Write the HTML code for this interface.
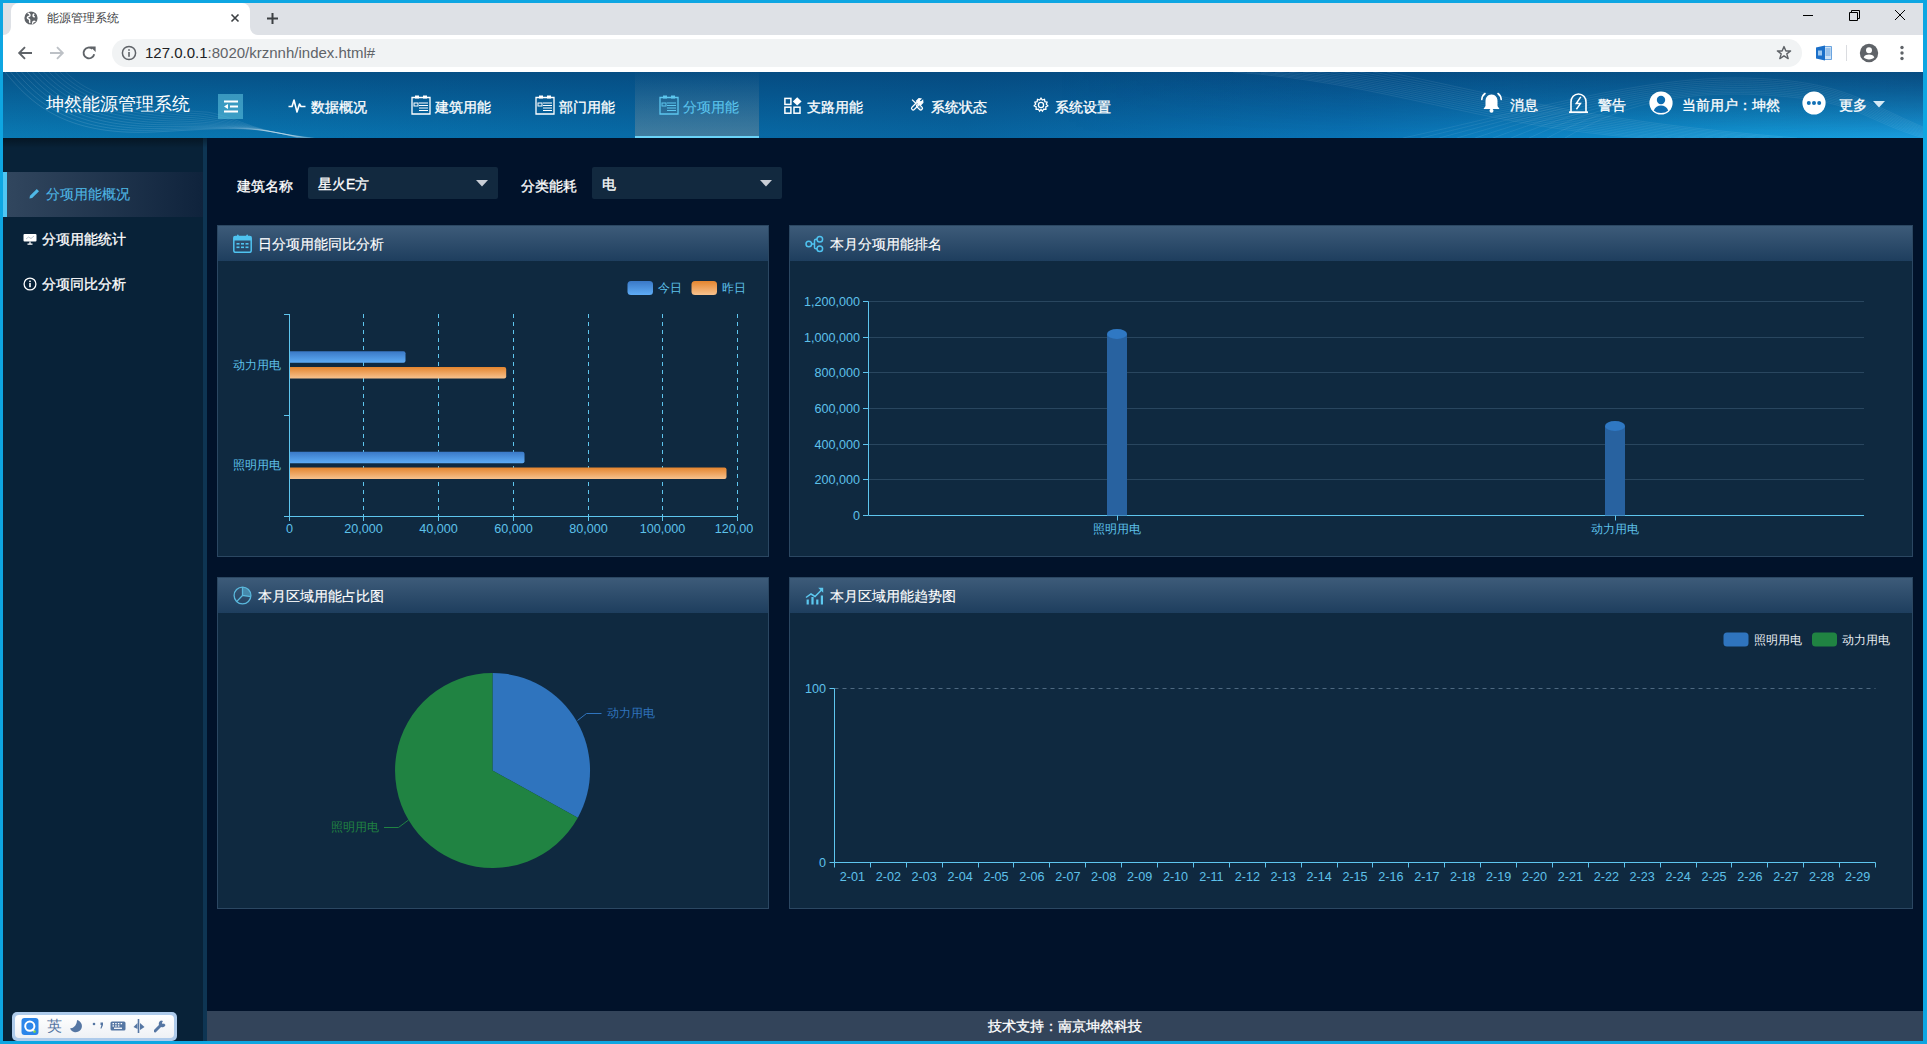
<!DOCTYPE html>
<html><head><meta charset="utf-8">
<style>
*{margin:0;padding:0;box-sizing:border-box}
html,body{width:1927px;height:1044px;overflow:hidden}
body{background:#0ea6e2;font-family:"Liberation Sans",sans-serif;position:relative}
.a{position:absolute}
#tabs{left:3px;top:3px;width:1920px;height:32px;background:#dee1e6}
#tab{left:11px;top:3px;width:239px;height:32px;background:#fff;border-radius:8px 8px 0 0}
#toolbar{left:3px;top:35px;width:1920px;height:37px;background:#fff}
#omni{left:112px;top:39px;width:1690px;height:28px;background:#f1f3f4;border-radius:14px}
#header{left:3px;top:72px;width:1920px;height:66px;background:linear-gradient(90deg,#0a7ab4 0%,#086fab 25%,#0865a0 50%,#0a74b6 70%,#149ad8 92%,#1a9ee0 100%);overflow:hidden}
#sidebar{left:3px;top:138px;width:200px;height:903px;background:#082238}
#sbborder{left:203px;top:138px;width:4px;height:903px;background:#0e3553}
#main{left:207px;top:138px;width:1716px;height:873px;background:#01122a}
#footer{left:207px;top:1011px;width:1716px;height:30px;background:#33445a;color:#fff;font-size:14px;text-align:center;line-height:30px;-webkit-text-stroke:0.3px #fff}
.nav{color:#fff;font-size:14px;line-height:20px;top:97px;white-space:nowrap;-webkit-text-stroke:0.3px currentColor}
.side{font-size:14px;color:#fff;white-space:nowrap;line-height:20px;-webkit-text-stroke:0.3px currentColor}
.panel{background:#0f2940;border:1px solid #2b4762}
.ph{position:absolute;left:0;top:0;right:0;height:35px;background:linear-gradient(#3d5b79,#1e3e5e)}
.pt{position:absolute;top:8px;color:#fff;font-size:14px;line-height:20px;white-space:nowrap;-webkit-text-stroke:0.15px currentColor}
.lbl{color:#fff;font-size:14px;line-height:20px;white-space:nowrap;-webkit-text-stroke:0.3px currentColor}
.sel{background:#12293f;border-radius:2px}
</style></head><body>
<!-- browser chrome -->
<div class="a" id="tabs"></div>
<div class="a" id="tab"></div>
<div class="a" id="toolbar"></div>
<div class="a" id="omni"></div>
<!-- tab corner flares -->
<svg class="a" style="left:3px;top:27px" width="8" height="8"><path d="M8 0 V8 H0 A8 8 0 0 0 8 0Z" fill="#fff"/></svg>
<svg class="a" style="left:250px;top:27px" width="8" height="8"><path d="M0 0 V8 H8 A8 8 0 0 1 0 0Z" fill="#fff"/></svg>
<!-- favicon globe -->
<svg class="a" style="left:24px;top:11px" width="14" height="14" viewBox="0 0 14 14"><circle cx="7" cy="7" r="6.6" fill="#5f6368"/><path d="M4.2 2.2C5.6 3 6.4 3.6 5.8 4.8C5.2 5.8 3.6 5.4 3.4 6.6C3.2 7.8 5 7.8 5.6 8.8C6 9.6 5.2 10.6 5.8 11.4M9.8 3.2C8.6 4.2 9 5.4 10.2 5.8M8.6 12.2C8.8 11 9.6 10.2 10.8 10.4" fill="none" stroke="#fff" stroke-width="1.5" stroke-linecap="round"/></svg>
<div class="a" style="left:47px;top:10px;font-size:12px;line-height:16px;color:#3c4043;white-space:nowrap">能源管理系统</div>
<svg class="a" style="left:230px;top:13px" width="10" height="10"><path d="M1.5 1.5L8.5 8.5M8.5 1.5L1.5 8.5" stroke="#3c4043" stroke-width="1.6"/></svg>
<svg class="a" style="left:266px;top:12px" width="13" height="13"><path d="M6.5 1V12M1 6.5H12" stroke="#3c4043" stroke-width="2"/></svg>
<!-- window controls -->
<div class="a" style="left:1803px;top:15px;width:10px;height:1px;background:#000"></div>
<svg class="a" style="left:1849px;top:10px" width="11" height="11"><path d="M0.5 2.5H8.5V10.5H0.5Z M2.5 2.5V0.5H10.5V8.5H8.5" fill="none" stroke="#000" stroke-width="1"/></svg>
<svg class="a" style="left:1894px;top:9px" width="12" height="12"><path d="M1 1L11 11M11 1L1 11" stroke="#000" stroke-width="1"/></svg>
<!-- nav buttons -->
<svg class="a" style="left:17px;top:45px" width="16" height="16" viewBox="0 0 16 16"><path d="M15 8H2.5M8 2.2L2.2 8L8 13.8" fill="none" stroke="#5f6368" stroke-width="1.9"/></svg>
<svg class="a" style="left:49px;top:45px" width="16" height="16" viewBox="0 0 16 16"><path d="M1 8H13.5M8 2.2L13.8 8L8 13.8" fill="none" stroke="#bdc1c6" stroke-width="1.9"/></svg>
<svg class="a" style="left:81px;top:45px" width="16" height="16" viewBox="0 0 16 16"><path d="M13.2 9.2A5.4 5.4 0 1 1 11.4 3.8" fill="none" stroke="#5f6368" stroke-width="1.9"/><path d="M9.2 1.6H14.6V7Z" fill="#5f6368"/></svg>
<!-- info icon -->
<svg class="a" style="left:121px;top:45px" width="16" height="16" viewBox="0 0 16 16"><circle cx="8" cy="8" r="6.6" fill="none" stroke="#5f6368" stroke-width="1.5"/><rect x="7.2" y="7" width="1.6" height="4.8" fill="#5f6368"/><rect x="7.2" y="4.2" width="1.6" height="1.6" fill="#5f6368"/></svg>
<div class="a" style="left:145px;top:44px;font-size:15px;line-height:18px;color:#202124;white-space:nowrap">127.0.0.1<span style="color:#5f6368">:8020/krznnh/index.html#</span></div>
<!-- star -->
<svg class="a" style="left:1776px;top:45px" width="16" height="16" viewBox="0 0 16 16"><path d="M8 1.6L9.9 6H14.6L10.8 8.9L12.2 13.6L8 10.8L3.8 13.6L5.2 8.9L1.4 6H6.1Z" fill="none" stroke="#5f6368" stroke-width="1.4" stroke-linejoin="round"/></svg>
<!-- office ext icon -->
<svg class="a" style="left:1815px;top:44px" width="18" height="18" viewBox="0 0 18 18"><path d="M9 2.5H16.5V15.5H9Z" fill="#cfe3f6" stroke="#4a90d9" stroke-width="0.8"/><path d="M10.5 5H15.5M10.5 7H15.5M10.5 9H15.5M10.5 11H15.5" stroke="#4a90d9" stroke-width="0.8"/><path d="M1 3.5L10 1.5V16.5L1 14.5Z" fill="#1a6fc9"/><rect x="3" y="6.5" width="4" height="5" fill="#9cc7ef"/></svg>
<div class="a" style="left:1846px;top:45px;width:1px;height:16px;background:#dadce0"></div>
<!-- profile -->
<svg class="a" style="left:1859px;top:43px" width="20" height="20" viewBox="0 0 20 20"><circle cx="10" cy="10" r="9.2" fill="#5f6368"/><circle cx="10" cy="7.2" r="3" fill="#fff"/><path d="M4.6 14.2C6 12.2 8 11.6 10 11.6S14 12.2 15.4 14.2C14.2 15.6 12.3 16.4 10 16.4S5.8 15.6 4.6 14.2Z" fill="#fff"/></svg>
<svg class="a" style="left:1898px;top:45px" width="8" height="17"><circle cx="4" cy="2.5" r="1.7" fill="#5f6368"/><circle cx="4" cy="8" r="1.7" fill="#5f6368"/><circle cx="4" cy="13.5" r="1.7" fill="#5f6368"/></svg>

<!-- app header -->
<div class="a" id="header"><div class="a" style="left:0;top:0;width:1920px;height:66px;background:linear-gradient(rgba(3,55,105,0.58),rgba(3,55,105,0))"></div><div class="a" style="left:0;top:0;width:1920px;height:66px;background:linear-gradient(90deg,rgba(3,55,105,0) 55%,rgba(3,55,105,0.5) 100%);-webkit-mask-image:linear-gradient(#000,rgba(0,0,0,0))"></div><svg class="a" style="left:0;top:0" width="1920" height="66" viewBox="0 0 1920 66"><g fill="none" stroke="#ffffff" stroke-width="0.8"><path d="M2.0 0 C 27.0 30.0, 60.0 64.0, 150.0 60.0 C 215.0 57.0, 250.0 52.0, 295.0 66" stroke-opacity="0.150"/><path d="M7.5 0 C 32.5 29.5, 66.0 61.4, 155.0 58.2 C 217.0 56.0, 250.0 52.8, 296.5 66" stroke-opacity="0.145"/><path d="M13.0 0 C 38.0 29.0, 72.0 58.8, 160.0 56.4 C 219.0 55.0, 250.0 53.6, 298.0 66" stroke-opacity="0.141"/><path d="M18.5 0 C 43.5 28.5, 78.0 56.2, 165.0 54.6 C 221.0 54.0, 250.0 54.4, 299.5 66" stroke-opacity="0.136"/><path d="M24.0 0 C 49.0 28.0, 84.0 53.6, 170.0 52.8 C 223.0 53.0, 250.0 55.2, 301.0 66" stroke-opacity="0.132"/><path d="M29.5 0 C 54.5 27.5, 90.0 51.0, 175.0 51.0 C 225.0 52.0, 250.0 56.0, 302.5 66" stroke-opacity="0.127"/><path d="M35.0 0 C 60.0 27.0, 96.0 48.4, 180.0 49.2 C 227.0 51.0, 250.0 56.8, 304.0 66" stroke-opacity="0.123"/><path d="M40.5 0 C 65.5 26.5, 102.0 45.8, 185.0 47.4 C 229.0 50.0, 250.0 57.6, 305.5 66" stroke-opacity="0.118"/><path d="M46.0 0 C 71.0 26.0, 108.0 43.2, 190.0 45.6 C 231.0 49.0, 250.0 58.4, 307.0 66" stroke-opacity="0.114"/><path d="M51.5 0 C 76.5 25.5, 114.0 40.6, 195.0 43.8 C 233.0 48.0, 250.0 59.2, 308.5 66" stroke-opacity="0.109"/><path d="M57.0 0 C 82.0 25.0, 120.0 38.0, 200.0 42.0 C 235.0 47.0, 250.0 60.0, 310.0 66" stroke-opacity="0.105"/><path d="M62.5 0 C 87.5 24.5, 126.0 35.4, 205.0 40.2 C 237.0 46.0, 250.0 60.8, 311.5 66" stroke-opacity="0.100"/><path d="M1230.0 0 C 1380.0 10.0, 1480.0 55.0, 1640.0 66" stroke-opacity="0.100"/><path d="M1244.0 0 C 1392.0 11.5, 1490.0 54.5, 1654.0 66" stroke-opacity="0.100"/><path d="M1258.0 0 C 1404.0 13.0, 1500.0 54.0, 1668.0 66" stroke-opacity="0.100"/><path d="M1272.0 0 C 1416.0 14.5, 1510.0 53.5, 1682.0 66" stroke-opacity="0.100"/><path d="M1286.0 0 C 1428.0 16.0, 1520.0 53.0, 1696.0 66" stroke-opacity="0.100"/><path d="M1300.0 0 C 1440.0 17.5, 1530.0 52.5, 1710.0 66" stroke-opacity="0.100"/><path d="M1314.0 0 C 1452.0 19.0, 1540.0 52.0, 1724.0 66" stroke-opacity="0.100"/><path d="M1328.0 0 C 1464.0 20.5, 1550.0 51.5, 1738.0 66" stroke-opacity="0.100"/><path d="M1342.0 0 C 1476.0 22.0, 1560.0 51.0, 1752.0 66" stroke-opacity="0.100"/><path d="M1356.0 0 C 1488.0 23.5, 1570.0 50.5, 1766.0 66" stroke-opacity="0.100"/><path d="M1370.0 0 C 1500.0 25.0, 1580.0 50.0, 1780.0 66" stroke-opacity="0.100"/><path d="M1384.0 0 C 1512.0 26.5, 1590.0 49.5, 1794.0 66" stroke-opacity="0.100"/><path d="M1400.0 66 C 1520.0 40.0, 1640.0 4.0, 1740.0 6.0 S 1860.0 30.0, 1920 55.0" stroke-opacity="0.090"/><path d="M1418.0 66 C 1532.0 38.5, 1646.0 5.5, 1744.0 8.0 S 1860.0 32.0, 1920 56.2" stroke-opacity="0.090"/><path d="M1436.0 66 C 1544.0 37.0, 1652.0 7.0, 1748.0 10.0 S 1860.0 34.0, 1920 57.4" stroke-opacity="0.090"/><path d="M1454.0 66 C 1556.0 35.5, 1658.0 8.5, 1752.0 12.0 S 1860.0 36.0, 1920 58.6" stroke-opacity="0.090"/><path d="M1472.0 66 C 1568.0 34.0, 1664.0 10.0, 1756.0 14.0 S 1860.0 38.0, 1920 59.8" stroke-opacity="0.090"/><path d="M1490.0 66 C 1580.0 32.5, 1670.0 11.5, 1760.0 16.0 S 1860.0 40.0, 1920 61.0" stroke-opacity="0.090"/><path d="M1508.0 66 C 1592.0 31.0, 1676.0 13.0, 1764.0 18.0 S 1860.0 42.0, 1920 62.2" stroke-opacity="0.090"/><path d="M1526.0 66 C 1604.0 29.5, 1682.0 14.5, 1768.0 20.0 S 1860.0 44.0, 1920 63.4" stroke-opacity="0.090"/><path d="M1544.0 66 C 1616.0 28.0, 1688.0 16.0, 1772.0 22.0 S 1860.0 46.0, 1920 64.6" stroke-opacity="0.090"/><path d="M1562.0 66 C 1628.0 26.5, 1694.0 17.5, 1776.0 24.0 S 1860.0 48.0, 1920 65.8" stroke-opacity="0.090"/></g></svg></div>
<div class="a" style="left:46px;top:93px;font-size:18px;line-height:22px;color:#fff;white-space:nowrap">坤然能源管理系统</div>
<div class="a" style="left:218px;top:94px;width:25px;height:25px;background:rgba(100,200,225,0.55)"></div>
<svg class="a" style="left:222px;top:99px" width="18" height="15" viewBox="0 0 18 15"><path d="M2 2.5H16M8 7.5H16M2 12.5H16" stroke="#fff" stroke-width="2"/><path d="M2 7.5L6 5V10Z" fill="#fff"/></svg>
<!-- nav -->
<svg class="a" style="left:288px;top:97px" width="18" height="17" viewBox="0 0 18 17"><path d="M0.5 9.5H4L6 3L9 15L11.5 7L13 9.5H17.5" fill="none" stroke="#fff" stroke-width="1.6" stroke-linejoin="round"/></svg>
<div class="a nav" style="left:311px">数据概况</div>
<svg class="a" style="left:411px;top:95px" width="20" height="20" viewBox="0 0 20 20"><path d="M1 2.5H19V19H1Z" fill="none" stroke="#fff" stroke-width="1.3"/><rect x="4" y="0.5" width="4" height="3" fill="#fff"/><rect x="12" y="0.5" width="4" height="3" fill="#fff"/><rect x="3" y="8" width="4" height="3" fill="none" stroke="#fff" stroke-width="1"/><path d="M8 8H17M8 10.5H17M8 13H17M8 15.5H17" stroke="#fff" stroke-width="1"/></svg>
<div class="a nav" style="left:435px">建筑用能</div>
<svg class="a" style="left:535px;top:95px" width="20" height="20" viewBox="0 0 20 20"><path d="M1 2.5H19V19H1Z" fill="none" stroke="#fff" stroke-width="1.3"/><rect x="4" y="0.5" width="4" height="3" fill="#fff"/><rect x="12" y="0.5" width="4" height="3" fill="#fff"/><rect x="3" y="8" width="4" height="3" fill="none" stroke="#fff" stroke-width="1"/><path d="M8 8H17M8 10.5H17M8 13H17M8 15.5H17" stroke="#fff" stroke-width="1"/></svg>
<div class="a nav" style="left:559px">部门用能</div>
<!-- active tab -->
<div class="a" style="left:635px;top:72px;width:124px;height:66px;background:linear-gradient(rgba(145,150,150,0.02),rgba(145,150,150,0.42))"></div>
<div class="a" style="left:635px;top:136px;width:124px;height:2px;background:#6ad3f8"></div>
<svg class="a" style="left:659px;top:95px" width="20" height="20" viewBox="0 0 20 20"><path d="M1 2.5H19V19H1Z" fill="none" stroke="#5cc6ee" stroke-width="1.3"/><rect x="4" y="0.5" width="4" height="3" fill="#5cc6ee"/><rect x="12" y="0.5" width="4" height="3" fill="#5cc6ee"/><rect x="3" y="8" width="4" height="3" fill="none" stroke="#5cc6ee" stroke-width="1"/><path d="M8 8H17M8 10.5H17M8 13H17M8 15.5H17" stroke="#5cc6ee" stroke-width="1"/></svg>
<div class="a nav" style="left:683px;color:#5cc6ee;-webkit-text-stroke:0.1px #5cc6ee">分项用能</div>
<svg class="a" style="left:784px;top:97px" width="18" height="17" viewBox="0 0 18 17"><rect x="0.9" y="1.4" width="6" height="6" fill="none" stroke="#fff" stroke-width="1.5"/><rect x="0.9" y="10.2" width="6" height="6" fill="none" stroke="#fff" stroke-width="1.5"/><rect x="10" y="10.2" width="6" height="6" fill="none" stroke="#fff" stroke-width="1.5"/><path d="M13.2 0.2L17.6 4.4L13.2 8.6L8.8 4.4Z" fill="#fff"/></svg>
<div class="a nav" style="left:807px">支路用能</div>
<svg class="a" style="left:909px;top:97px" width="16" height="15" viewBox="0 0 16 15"><g fill="none" stroke="#fff" stroke-width="1.2"><g transform="rotate(-45 8 7.5)"><path d="M8 0.5V6.5"/><rect x="6.3" y="7.5" width="3.4" height="7" rx="1.6" fill="#fff" fill-opacity="0.25"/></g><g transform="rotate(45 8 7.5)"><rect x="6.4" y="5.5" width="3.2" height="9" rx="1.5"/><path d="M5.2 5.5V2L6.7 0.8V3.4H9.3V0.8L10.8 2V5.5Z" fill="#fff"/></g></g></svg>
<div class="a nav" style="left:931px">系统状态</div>
<svg class="a" style="left:1033px;top:97px" width="16" height="16" viewBox="0 0 16 16"><g fill="none" stroke="#fff" stroke-width="1.3"><circle cx="8" cy="8" r="2.6"/><path d="M8 1.2L9.3 3.1L11.5 2.4L11.9 4.6L14.1 5.1L13.3 7.2L14.8 8.9L12.8 10L12.9 12.3L10.6 12.1L9.4 14.1L8 12.4L6.6 14.1L5.4 12.1L3.1 12.3L3.2 10L1.2 8.9L2.7 7.2L1.9 5.1L4.1 4.6L4.5 2.4L6.7 3.1Z"/></g></svg>
<div class="a nav" style="left:1055px">系统设置</div>
<!-- right header -->
<svg class="a" style="left:1480px;top:92px" width="23" height="22" viewBox="0 0 23 22"><path d="M11.5 2.5C7.5 2.5 5.5 5.5 5.5 9V14L3.5 17H19.5L17.5 14V9C17.5 5.5 15.5 2.5 11.5 2.5Z" fill="#fff"/><circle cx="11.5" cy="18.8" r="2" fill="#fff"/><path d="M5 1.5C3 3 2 5 1.8 7.5M18 1.5C20 3 21 5 21.2 7.5" fill="none" stroke="#fff" stroke-width="1.6" stroke-linecap="round"/></svg>
<div class="a nav" style="left:1510px;top:95px">消息</div>
<svg class="a" style="left:1567px;top:92px" width="23" height="22" viewBox="0 0 23 22"><path d="M4 20V10C4 5.5 7.2 2 11.5 2S19 5.5 19 10V20" fill="none" stroke="#fff" stroke-width="1.6"/><path d="M2 20.2H21" stroke="#fff" stroke-width="1.8"/><path d="M13.8 4.8L9.2 11.6H13.4L9.4 17.2" fill="none" stroke="#fff" stroke-width="1.5" stroke-linejoin="miter"/></svg>
<div class="a nav" style="left:1598px;top:95px">警告</div>
<svg class="a" style="left:1649px;top:91px" width="24" height="24" viewBox="0 0 24 24"><circle cx="12" cy="12" r="11.6" fill="#fff"/><circle cx="12" cy="9" r="4.2" fill="#0d6cb0"/><path d="M4.8 19.5C6 16 8.8 14.6 12 14.6S18 16 19.2 19.5C17.5 21.2 15 22 12 22S6.5 21.2 4.8 19.5Z" fill="#0d6cb0"/></svg>
<div class="a nav" style="left:1682px;top:95px">当前用户：坤然</div>
<svg class="a" style="left:1802px;top:91px" width="24" height="24" viewBox="0 0 24 24"><circle cx="12" cy="12" r="11.6" fill="#fff"/><circle cx="6.8" cy="12" r="2" fill="#1170b5"/><circle cx="12" cy="12" r="2" fill="#1170b5"/><circle cx="17.2" cy="12" r="2" fill="#1170b5"/></svg>
<div class="a nav" style="left:1839px;top:95px">更多</div>
<svg class="a" style="left:1873px;top:101px" width="12" height="7"><path d="M0 0H12L6 6.5Z" fill="#d6eaf6"/></svg>

<div class="a" id="sidebar"></div>
<div class="a" style="left:3px;top:172px;width:200px;height:45px;background:linear-gradient(90deg,#32475f,#0f233c)"></div>
<div class="a" style="left:3px;top:172px;width:4px;height:45px;background:#4fc6f3"></div>
<svg class="a" style="left:29px;top:188px" width="11" height="11" viewBox="0 0 11 11"><path d="M0.5 10.5L1 7.8L7.8 1L10 3.2L3.2 10Z" fill="#4fb8e6"/></svg>
<div class="a side" style="left:46px;top:184px;color:#4fb8e6;-webkit-text-stroke:0.1px #4fb8e6">分项用能概况</div>
<svg class="a" style="left:23px;top:233px" width="14" height="12" viewBox="0 0 14 12"><rect x="0.5" y="1" width="13" height="7.5" rx="1" fill="#fff"/><path d="M3 6L5.5 4L8 5.5L11 3" fill="none" stroke="#9aa9b8" stroke-width="0.7"/><path d="M7 8.5V11M4.5 11.2H9.5" stroke="#fff" stroke-width="1.2"/></svg>
<div class="a side" style="left:42px;top:229px">分项用能统计</div>
<svg class="a" style="left:23px;top:277px" width="14" height="14" viewBox="0 0 14 14"><circle cx="7" cy="7" r="5.9" fill="none" stroke="#fff" stroke-width="1.3"/><rect x="6.2" y="6" width="1.6" height="4.2" fill="#fff"/><rect x="6.2" y="3.6" width="1.6" height="1.5" fill="#fff"/></svg>
<div class="a side" style="left:42px;top:274px">分项同比分析</div>
<div class="a" id="sbborder"></div>
<div class="a" style="left:3px;top:138px;width:1920px;height:10px;background:linear-gradient(rgba(0,0,0,0.35),rgba(0,0,0,0))"></div>
<div class="a" id="main"></div>
<div class="a lbl" style="left:237px;top:176px">建筑名称</div>
<div class="a sel" style="left:308px;top:167px;width:190px;height:32px"></div>
<div class="a lbl" style="left:318px;top:174px">星火E方</div>
<svg class="a" style="left:476px;top:180px" width="12" height="7"><path d="M0 0H12L6 6.5Z" fill="#c9ced6"/></svg>
<div class="a lbl" style="left:521px;top:176px">分类能耗</div>
<div class="a sel" style="left:592px;top:167px;width:190px;height:32px"></div>
<div class="a lbl" style="left:602px;top:174px">电</div>
<svg class="a" style="left:760px;top:180px" width="12" height="7"><path d="M0 0H12L6 6.5Z" fill="#c9ced6"/></svg>

<div class="a panel" style="left:217px;top:225px;width:552px;height:332px"><div class="ph"></div>
<svg class="a" style="left:15px;top:8px" width="19" height="19" viewBox="0 0 19 19"><rect x="0.8" y="2.5" width="17.4" height="15.8" rx="1.5" fill="none" stroke="#4fc3f0" stroke-width="1.5"/><rect x="0.8" y="2.5" width="17.4" height="4" fill="#4fc3f0"/><rect x="4" y="0.5" width="1.6" height="4" rx="0.8" fill="#4fc3f0"/><rect x="13.4" y="0.5" width="1.6" height="4" rx="0.8" fill="#4fc3f0"/><g fill="#4fc3f0"><rect x="3.5" y="9" width="3" height="1.6"/><rect x="8" y="9" width="3" height="1.6"/><rect x="12.5" y="9" width="3" height="1.6"/><rect x="3.5" y="12.5" width="3" height="1.6"/><rect x="8" y="12.5" width="3" height="1.6"/><rect x="12.5" y="12.5" width="3" height="1.6"/></g></svg>
<div class="pt" style="left:40px">日分项用能同比分析</div>
</div>

<div class="a panel" style="left:789px;top:225px;width:1124px;height:332px"><div class="ph"></div>
<svg class="a" style="left:15px;top:9px" width="19" height="18" viewBox="0 0 19 18"><g fill="none" stroke="#4fc3f0" stroke-width="1.5"><circle cx="3.8" cy="9" r="2.8"/><circle cx="14.8" cy="4.2" r="2.8"/><circle cx="14.8" cy="13.8" r="2.8"/><path d="M6.6 9H9.5V5.5Q9.5 4.2 11 4.2H12M9.5 9V12.5Q9.5 13.8 11 13.8H12"/></g></svg>
<div class="pt" style="left:40px">本月分项用能排名</div>
</div>

<div class="a panel" style="left:217px;top:577px;width:552px;height:332px"><div class="ph"></div>
<svg class="a" style="left:15px;top:8px" width="19" height="19" viewBox="0 0 19 19"><path d="M9.5 1.2A8.3 8.3 0 0 1 17.8 9.5L17.7 10.6L9.5 9.5Z" fill="#5ab8dc" fill-opacity="0.55"/><g fill="none" stroke="#5ab8dc" stroke-width="1.3"><circle cx="9.5" cy="9.5" r="8.4"/><path d="M9.5 1V9.5L17.8 10.6M9.5 9.5L3.6 15.6"/></g></svg>
<div class="pt" style="left:40px">本月区域用能占比图</div>
</div>

<div class="a panel" style="left:789px;top:577px;width:1124px;height:332px"><div class="ph"></div>
<svg class="a" style="left:15px;top:9px" width="19" height="18" viewBox="0 0 19 18"><g fill="#5cc8ef"><rect x="1.6" y="12.5" width="2.2" height="5"/><rect x="6.4" y="10" width="2.2" height="7.5"/><rect x="11.2" y="12.5" width="2.2" height="5"/><rect x="15.8" y="8.5" width="2.2" height="9"/><path d="M13.2 0.8H18.2V5.8Z"/></g><path d="M1 10.5L6 7L10 9.5L16.5 3" fill="none" stroke="#5cc8ef" stroke-width="1.5"/></svg>
<div class="pt" style="left:40px">本月区域用能趋势图</div>
</div>
<!--CHARTS-->
<svg class="a" style="left:0;top:0;pointer-events:none" width="1927" height="1044" viewBox="0 0 1927 1044">
<defs>
<linearGradient id="gb" x1="0" y1="0" x2="0" y2="1"><stop offset="0" stop-color="#3a78c6"/><stop offset="1" stop-color="#5eacf6"/></linearGradient>
<linearGradient id="go" x1="0" y1="0" x2="0" y2="1"><stop offset="0" stop-color="#e4852f"/><stop offset="1" stop-color="#f7c28e"/></linearGradient>
<clipPath id="c1"><rect x="218" y="262" width="535" height="294"/></clipPath>
</defs>
<g font-family="Liberation Sans, sans-serif" font-size="12" fill="#5ec1ea">
<line x1="363.5" y1="314" x2="363.5" y2="516" stroke="#5ec5ee" stroke-width="1" stroke-dasharray="4 4"/>
<line x1="438.5" y1="314" x2="438.5" y2="516" stroke="#5ec5ee" stroke-width="1" stroke-dasharray="4 4"/>
<line x1="513.5" y1="314" x2="513.5" y2="516" stroke="#5ec5ee" stroke-width="1" stroke-dasharray="4 4"/>
<line x1="588.5" y1="314" x2="588.5" y2="516" stroke="#5ec5ee" stroke-width="1" stroke-dasharray="4 4"/>
<line x1="662.5" y1="314" x2="662.5" y2="516" stroke="#5ec5ee" stroke-width="1" stroke-dasharray="4 4"/>
<line x1="737.5" y1="314" x2="737.5" y2="516" stroke="#5ec5ee" stroke-width="1" stroke-dasharray="4 4"/>
<path d="M289.5 351.3 H403.5 Q405.5 351.3 405.5 353.3 V360.8 Q405.5 362.8 403.5 362.8 H289.5 Z" fill="url(#gb)"/>
<path d="M289.5 367.0 H504.2 Q506.2 367.0 506.2 369.0 V376.5 Q506.2 378.5 504.2 378.5 H289.5 Z" fill="url(#go)"/>
<path d="M289.5 451.8 H522.5 Q524.5 451.8 524.5 453.8 V461.3 Q524.5 463.3 522.5 463.3 H289.5 Z" fill="url(#gb)"/>
<path d="M289.5 467.6 H724.5 Q726.5 467.6 726.5 469.6 V477.1 Q726.5 479.1 724.5 479.1 H289.5 Z" fill="url(#go)"/>
<path d="M289.5 314 V516.5 M284 314.5 H289.5 M284 415.5 H289.5 M284 516.5 H737.5" stroke="#5ec5ee" stroke-width="1" fill="none"/>
<line x1="289.5" y1="516.5" x2="289.5" y2="521" stroke="#5ec5ee"/>
<line x1="363.5" y1="516.5" x2="363.5" y2="521" stroke="#5ec5ee"/>
<line x1="438.5" y1="516.5" x2="438.5" y2="521" stroke="#5ec5ee"/>
<line x1="513.5" y1="516.5" x2="513.5" y2="521" stroke="#5ec5ee"/>
<line x1="588.5" y1="516.5" x2="588.5" y2="521" stroke="#5ec5ee"/>
<line x1="662.5" y1="516.5" x2="662.5" y2="521" stroke="#5ec5ee"/>
<line x1="737.5" y1="516.5" x2="737.5" y2="521" stroke="#5ec5ee"/>
<g clip-path="url(#c1)" font-size="12.6">
<text x="289.5" y="533" text-anchor="middle">0</text>
<text x="363.5" y="533" text-anchor="middle">20,000</text>
<text x="438.5" y="533" text-anchor="middle">40,000</text>
<text x="513.5" y="533" text-anchor="middle">60,000</text>
<text x="588.5" y="533" text-anchor="middle">80,000</text>
<text x="662.5" y="533" text-anchor="middle">100,000</text>
<text x="737.5" y="533" text-anchor="middle">120,000</text>
</g>
<text x="281" y="368.5" text-anchor="end">动力用电</text>
<text x="281" y="469" text-anchor="end">照明用电</text>
<rect x="627.5" y="281" width="25.5" height="14" rx="3.5" fill="url(#gb)"/>
<text x="657.5" y="292">今日</text>
<rect x="691.5" y="281" width="25.5" height="14" rx="3.5" fill="url(#go)"/>
<text x="721.5" y="292">昨日</text>
</g>
<g font-family="Liberation Sans, sans-serif" font-size="12" fill="#5ec1ea">
<line x1="863" y1="515.5" x2="868.5" y2="515.5" stroke="#5ec5ee"/>
<text x="860" y="520.0" text-anchor="end" font-size="12.6">0</text>
<line x1="868.5" y1="479.5" x2="1864" y2="479.5" stroke="#29465f" stroke-width="1"/>
<line x1="863" y1="479.5" x2="868.5" y2="479.5" stroke="#5ec5ee"/>
<text x="860" y="484.3" text-anchor="end" font-size="12.6">200,000</text>
<line x1="868.5" y1="444.5" x2="1864" y2="444.5" stroke="#29465f" stroke-width="1"/>
<line x1="863" y1="444.5" x2="868.5" y2="444.5" stroke="#5ec5ee"/>
<text x="860" y="448.7" text-anchor="end" font-size="12.6">400,000</text>
<line x1="868.5" y1="408.5" x2="1864" y2="408.5" stroke="#29465f" stroke-width="1"/>
<line x1="863" y1="408.5" x2="868.5" y2="408.5" stroke="#5ec5ee"/>
<text x="860" y="413.0" text-anchor="end" font-size="12.6">600,000</text>
<line x1="868.5" y1="372.5" x2="1864" y2="372.5" stroke="#29465f" stroke-width="1"/>
<line x1="863" y1="372.5" x2="868.5" y2="372.5" stroke="#5ec5ee"/>
<text x="860" y="377.3" text-anchor="end" font-size="12.6">800,000</text>
<line x1="868.5" y1="337.5" x2="1864" y2="337.5" stroke="#29465f" stroke-width="1"/>
<line x1="863" y1="337.5" x2="868.5" y2="337.5" stroke="#5ec5ee"/>
<text x="860" y="341.7" text-anchor="end" font-size="12.6">1,000,000</text>
<line x1="868.5" y1="301.5" x2="1864" y2="301.5" stroke="#29465f" stroke-width="1"/>
<line x1="863" y1="301.5" x2="868.5" y2="301.5" stroke="#5ec5ee"/>
<text x="860" y="306.0" text-anchor="end" font-size="12.6">1,200,000</text>
<path d="M868.5 301.5 V515.5 H1864" stroke="#5ec5ee" fill="none"/>
<rect x="1107.0" y="334.0" width="20" height="181.5" fill="#2862a0"/>
<ellipse cx="1117.0" cy="334.0" rx="10" ry="5" fill="#2f78c3"/>
<line x1="1117.5" y1="515.5" x2="1117.5" y2="520.5" stroke="#5ec5ee"/>
<text x="1117.0" y="533" text-anchor="middle">照明用电</text>
<rect x="1605.0" y="426.0" width="20" height="89.5" fill="#2862a0"/>
<ellipse cx="1615.0" cy="426.0" rx="10" ry="5" fill="#2f78c3"/>
<line x1="1615.5" y1="515.5" x2="1615.5" y2="520.5" stroke="#5ec5ee"/>
<text x="1615.0" y="533" text-anchor="middle">动力用电</text>
</g>
<path d="M492.5 770.5 L492.5 673.0 A97.5 97.5 0 0 1 577.8 817.8 Z" fill="#2f74be"/>
<path d="M492.5 770.5 L577.8 817.8 A97.5 97.5 0 1 1 492.5 673.0 Z" fill="#208342"/>
<path d="M577.5 720.5 L586.5 713.5 H601.5" stroke="#2f74be" stroke-width="1" fill="none"/>
<path d="M408.5 820 L398.5 827.5 H384" stroke="#208342" stroke-width="1" fill="none"/>
<g font-family="Liberation Sans, sans-serif" font-size="12">
<text x="607" y="717" fill="#2f74be">动力用电</text>
<text x="379" y="831" fill="#208342" text-anchor="end">照明用电</text>
</g>
<g font-family="Liberation Sans, sans-serif" font-size="12" fill="#5ec1ea">
<line x1="834.5" y1="688.5" x2="1875.5" y2="688.5" stroke="#4d6880" stroke-dasharray="4 4"/>
<path d="M834.5 688.5 V862.5 H1875.5 M829.5 688.5 H834.5 M829.5 862.5 H834.5" stroke="#5ec5ee" fill="none"/>
<line x1="834.5" y1="862.5" x2="834.5" y2="867.5" stroke="#5ec5ee"/>
<line x1="870.5" y1="862.5" x2="870.5" y2="867.5" stroke="#5ec5ee"/>
<line x1="906.5" y1="862.5" x2="906.5" y2="867.5" stroke="#5ec5ee"/>
<line x1="942.5" y1="862.5" x2="942.5" y2="867.5" stroke="#5ec5ee"/>
<line x1="978.5" y1="862.5" x2="978.5" y2="867.5" stroke="#5ec5ee"/>
<line x1="1013.5" y1="862.5" x2="1013.5" y2="867.5" stroke="#5ec5ee"/>
<line x1="1049.5" y1="862.5" x2="1049.5" y2="867.5" stroke="#5ec5ee"/>
<line x1="1085.5" y1="862.5" x2="1085.5" y2="867.5" stroke="#5ec5ee"/>
<line x1="1121.5" y1="862.5" x2="1121.5" y2="867.5" stroke="#5ec5ee"/>
<line x1="1157.5" y1="862.5" x2="1157.5" y2="867.5" stroke="#5ec5ee"/>
<line x1="1193.5" y1="862.5" x2="1193.5" y2="867.5" stroke="#5ec5ee"/>
<line x1="1229.5" y1="862.5" x2="1229.5" y2="867.5" stroke="#5ec5ee"/>
<line x1="1265.5" y1="862.5" x2="1265.5" y2="867.5" stroke="#5ec5ee"/>
<line x1="1301.5" y1="862.5" x2="1301.5" y2="867.5" stroke="#5ec5ee"/>
<line x1="1337.5" y1="862.5" x2="1337.5" y2="867.5" stroke="#5ec5ee"/>
<line x1="1372.5" y1="862.5" x2="1372.5" y2="867.5" stroke="#5ec5ee"/>
<line x1="1408.5" y1="862.5" x2="1408.5" y2="867.5" stroke="#5ec5ee"/>
<line x1="1444.5" y1="862.5" x2="1444.5" y2="867.5" stroke="#5ec5ee"/>
<line x1="1480.5" y1="862.5" x2="1480.5" y2="867.5" stroke="#5ec5ee"/>
<line x1="1516.5" y1="862.5" x2="1516.5" y2="867.5" stroke="#5ec5ee"/>
<line x1="1552.5" y1="862.5" x2="1552.5" y2="867.5" stroke="#5ec5ee"/>
<line x1="1588.5" y1="862.5" x2="1588.5" y2="867.5" stroke="#5ec5ee"/>
<line x1="1624.5" y1="862.5" x2="1624.5" y2="867.5" stroke="#5ec5ee"/>
<line x1="1660.5" y1="862.5" x2="1660.5" y2="867.5" stroke="#5ec5ee"/>
<line x1="1696.5" y1="862.5" x2="1696.5" y2="867.5" stroke="#5ec5ee"/>
<line x1="1731.5" y1="862.5" x2="1731.5" y2="867.5" stroke="#5ec5ee"/>
<line x1="1767.5" y1="862.5" x2="1767.5" y2="867.5" stroke="#5ec5ee"/>
<line x1="1803.5" y1="862.5" x2="1803.5" y2="867.5" stroke="#5ec5ee"/>
<line x1="1839.5" y1="862.5" x2="1839.5" y2="867.5" stroke="#5ec5ee"/>
<line x1="1875.5" y1="862.5" x2="1875.5" y2="867.5" stroke="#5ec5ee"/>
<g font-size="12.6">
<text x="852.4" y="880.5" text-anchor="middle">2-01</text>
<text x="888.3" y="880.5" text-anchor="middle">2-02</text>
<text x="924.2" y="880.5" text-anchor="middle">2-03</text>
<text x="960.1" y="880.5" text-anchor="middle">2-04</text>
<text x="996.0" y="880.5" text-anchor="middle">2-05</text>
<text x="1031.9" y="880.5" text-anchor="middle">2-06</text>
<text x="1067.8" y="880.5" text-anchor="middle">2-07</text>
<text x="1103.7" y="880.5" text-anchor="middle">2-08</text>
<text x="1139.6" y="880.5" text-anchor="middle">2-09</text>
<text x="1175.5" y="880.5" text-anchor="middle">2-10</text>
<text x="1211.4" y="880.5" text-anchor="middle">2-11</text>
<text x="1247.3" y="880.5" text-anchor="middle">2-12</text>
<text x="1283.2" y="880.5" text-anchor="middle">2-13</text>
<text x="1319.1" y="880.5" text-anchor="middle">2-14</text>
<text x="1355.0" y="880.5" text-anchor="middle">2-15</text>
<text x="1390.9" y="880.5" text-anchor="middle">2-16</text>
<text x="1426.8" y="880.5" text-anchor="middle">2-17</text>
<text x="1462.7" y="880.5" text-anchor="middle">2-18</text>
<text x="1498.6" y="880.5" text-anchor="middle">2-19</text>
<text x="1534.5" y="880.5" text-anchor="middle">2-20</text>
<text x="1570.4" y="880.5" text-anchor="middle">2-21</text>
<text x="1606.3" y="880.5" text-anchor="middle">2-22</text>
<text x="1642.2" y="880.5" text-anchor="middle">2-23</text>
<text x="1678.1" y="880.5" text-anchor="middle">2-24</text>
<text x="1714.0" y="880.5" text-anchor="middle">2-25</text>
<text x="1749.9" y="880.5" text-anchor="middle">2-26</text>
<text x="1785.8" y="880.5" text-anchor="middle">2-27</text>
<text x="1821.7" y="880.5" text-anchor="middle">2-28</text>
<text x="1857.6" y="880.5" text-anchor="middle">2-29</text>
<text x="826" y="692.5" text-anchor="end">100</text>
<text x="826" y="866.5" text-anchor="end">0</text>
</g></g>
<rect x="1723.5" y="632.5" width="25" height="14" rx="3.5" fill="#2f74be"/>
<rect x="1812" y="632.5" width="25" height="14" rx="3.5" fill="#208342"/>
<g font-family="Liberation Sans, sans-serif" font-size="12" fill="#e8edf2"><text x="1753.5" y="644">照明用电</text><text x="1841.5" y="644">动力用电</text></g>
</svg>
<!--/CHARTS-->
<div class="a" id="footer">技术支持：南京坤然科技</div>
<!-- IME toolbar -->
<div class="a" style="left:12px;top:1012px;width:165px;height:29px;background:#aecbeb;border-radius:5px"></div>
<div class="a" style="left:15px;top:1015px;width:159px;height:23px;background:linear-gradient(#ffffff,#eef1f5);border-radius:4px"></div>
<svg class="a" style="left:21px;top:1018px" width="18" height="17" viewBox="0 0 18 17"><rect x="0.5" y="0" width="17" height="17" rx="3" fill="#2b86ea"/><circle cx="8.8" cy="8.2" r="4.6" fill="none" stroke="#fff" stroke-width="2"/><path d="M11 11L13.5 13.5" stroke="#fff" stroke-width="2"/><circle cx="13.6" cy="13.6" r="1.3" fill="#7bd34d"/></svg>
<div class="a" style="left:47px;top:1017px;font-size:15px;line-height:18px;color:#5576a3;white-space:nowrap">英</div>
<svg class="a" style="left:69px;top:1019px" width="14" height="14" viewBox="0 0 14 14"><path d="M8 1A6.2 6.2 0 1 1 1 9.5A8 8 0 0 0 8 1Z" fill="#5576a3"/></svg>
<svg class="a" style="left:92px;top:1021px" width="12" height="9" viewBox="0 0 12 9"><circle cx="2" cy="3" r="1.3" fill="#5576a3"/><path d="M8.5 1.5H11V4L9.5 7.5H8.4L9.4 4H8.5Z" fill="#5576a3"/></svg>
<svg class="a" style="left:110px;top:1021px" width="16" height="10" viewBox="0 0 16 10"><rect x="0.5" y="0.5" width="15" height="9" rx="1.5" fill="#5576a3"/><g fill="#fff"><rect x="2.5" y="2" width="1.5" height="1.3"/><rect x="5.2" y="2" width="1.5" height="1.3"/><rect x="7.9" y="2" width="1.5" height="1.3"/><rect x="10.6" y="2" width="1.5" height="1.3"/><rect x="2.5" y="4.3" width="1.5" height="1.3"/><rect x="5.2" y="4.3" width="1.5" height="1.3"/><rect x="7.9" y="4.3" width="1.5" height="1.3"/><rect x="4" y="6.6" width="8" height="1.3"/></g></svg>
<svg class="a" style="left:133px;top:1018px" width="12" height="16" viewBox="0 0 12 16"><path d="M5.5 1V15" stroke="#5576a3" stroke-width="1.6"/><path d="M0.5 9L4.5 5V11Z M7 5L11.5 9L7 12Z" fill="#5576a3"/></svg>
<svg class="a" style="left:154px;top:1018px" width="13" height="15" viewBox="0 0 13 15"><path d="M1 13L6.5 7.5" stroke="#5576a3" stroke-width="3" stroke-linecap="round"/><path d="M7 2.5A3.5 3.5 0 1 0 11.5 7L10 5.5L8.5 6L8 4.5L9 3Z" fill="#5576a3"/></svg>

</body></html>
